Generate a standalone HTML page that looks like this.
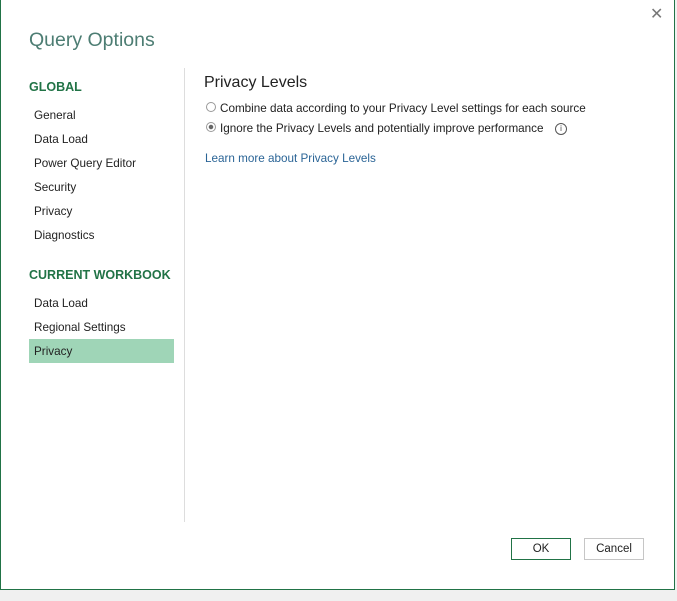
<!DOCTYPE html>
<html><head><style>
body{margin:0;width:677px;height:601px;background:#f0f0f0;font-family:"Liberation Sans",sans-serif;position:relative;overflow:hidden}
.dlg{position:absolute;left:0;top:0;width:673px;height:589px;background:#fff;border-left:1px solid #217346;border-right:1px solid #217346;border-bottom:1px solid #217346}
.t{position:absolute;font-size:11.7px;color:#222;white-space:nowrap}
.h{position:absolute;font-size:12.5px;font-weight:bold;color:#217346;white-space:nowrap}
</style></head><body>
<div class="dlg">
<div class="t" style="left:28px;top:29px;font-size:19.5px;color:#4d7d73">Query Options</div>
<div style="position:absolute;left:649px;top:4px;font-size:16px;color:#777">✕</div>
<div class="h" style="left:28px;top:80px">GLOBAL</div>
<div class="t" style="left:33px;top:109px">General</div>
<div class="t" style="left:33px;top:133px">Data Load</div>
<div class="t" style="left:33px;top:157px">Power Query Editor</div>
<div class="t" style="left:33px;top:181px">Security</div>
<div class="t" style="left:33px;top:205px">Privacy</div>
<div class="t" style="left:33px;top:229px">Diagnostics</div>
<div class="h" style="left:28px;top:268px">CURRENT WORKBOOK</div>
<div class="t" style="left:33px;top:297px">Data Load</div>
<div class="t" style="left:33px;top:321px">Regional Settings</div>
<div style="position:absolute;left:28px;top:339px;width:145px;height:24px;background:#9fd5b7"></div>
<div class="t" style="left:33px;top:345px">Privacy</div>
<div style="position:absolute;left:183px;top:68px;width:1px;height:454px;background:#ddd"></div>
<div class="t" style="left:203px;top:74px;font-size:16px">Privacy Levels</div>
<div style="position:absolute;left:205px;top:102px;width:8px;height:8px;border:1px solid #999;border-radius:50%"></div>
<div class="t" style="left:219px;top:102px">Combine data according to your Privacy Level settings for each source</div>
<div style="position:absolute;left:205px;top:122px;width:8px;height:8px;border:1px solid #999;border-radius:50%;background:radial-gradient(circle,#666 0 2px,#fff 2.5px)"></div>
<div class="t" style="left:219px;top:122px">Ignore the Privacy Levels and potentially improve performance</div>
<div style="position:absolute;left:554px;top:123px;width:10px;height:10px;border:1px solid #555;border-radius:50%;font-size:8px;line-height:10px;text-align:center;color:#444">i</div>
<div class="t" style="left:204px;top:152px;color:#2a6496">Learn more about Privacy Levels</div>
<div style="position:absolute;left:510px;top:538px;width:58px;height:20px;border:1px solid #217346;font-size:11.5px;line-height:20px;text-align:center;color:#222">OK</div>
<div style="position:absolute;left:583px;top:538px;width:58px;height:20px;border:1px solid #c6c6c6;font-size:11.5px;line-height:20px;text-align:center;color:#222">Cancel</div>
</div>
</body></html>
